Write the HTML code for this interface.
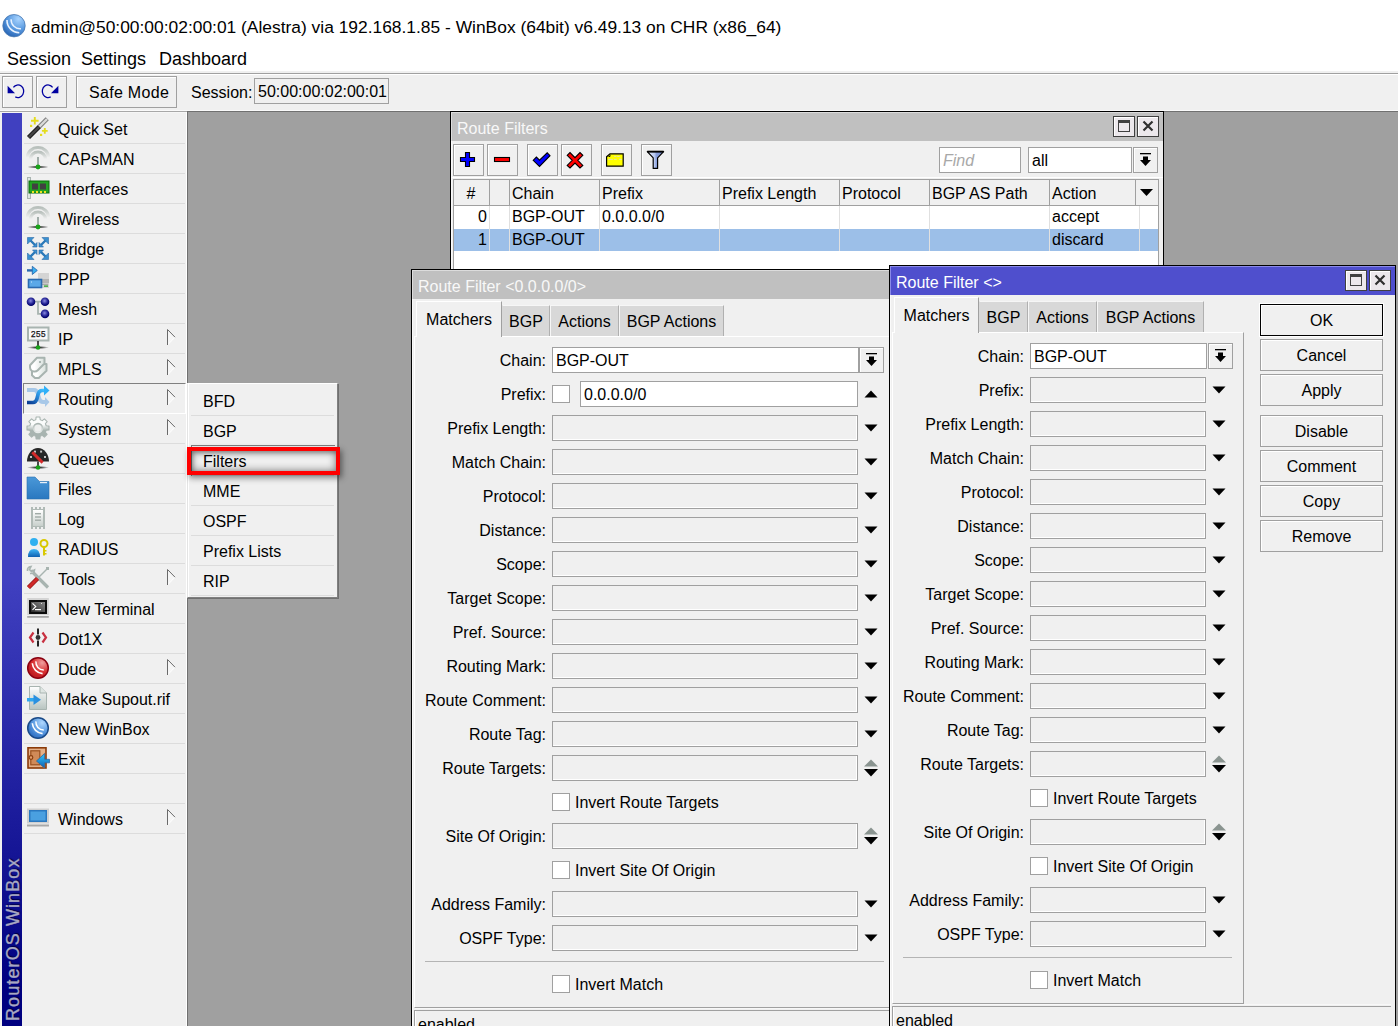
<!DOCTYPE html>
<html><head><meta charset="utf-8"><style>
html,body{margin:0;padding:0}
body{width:1398px;height:1026px;overflow:hidden;position:relative;background:#a0a0a0;font-family:"Liberation Sans", sans-serif;font-size:16px;color:#000}
div{position:absolute}
.t{white-space:nowrap}
svg{position:absolute;overflow:visible}
</style></head><body>
<div style="left:0px;top:0px;width:1398px;height:71px;background:#fff"></div>
<svg style="position:absolute;left:0px;top:12px" width="30" height="28" viewBox="0 0 30 28"><defs><radialGradient id="wg" cx="0.7" cy="0.2" r="0.95"><stop offset="0" stop-color="#a8d4ff"/><stop offset="0.5" stop-color="#5a9ae0"/><stop offset="1" stop-color="#1c58aa"/></radialGradient></defs><circle cx="14" cy="13.7" r="11.2" fill="url(#wg)" stroke="#4a78b0" stroke-width="0.8"/><path d="M7 7.9 A12.5 12.5 0 0 0 19.3 20.7" stroke="#e8f2ff" stroke-width="1.6" fill="none"/><path d="M11.1 7.3 A9 9 0 0 0 21 16.7" stroke="#e8f2ff" stroke-width="1.5" fill="none"/></svg>
<div class="t" style="left:31px;top:19px;font-size:17.4px;line-height:17.4px;color:#000;">admin@50:00:00:02:00:01 (Alestra) via 192.168.1.85 - WinBox (64bit) v6.49.13 on CHR (x86_64)</div>
<div class="t" style="left:7px;top:50px;font-size:18px;line-height:18px;color:#000;">Session</div>
<div class="t" style="left:81px;top:50px;font-size:18px;line-height:18px;color:#000;">Settings</div>
<div class="t" style="left:159px;top:50px;font-size:18px;line-height:18px;color:#000;">Dashboard</div>
<div style="left:0px;top:71px;width:1398px;height:2px;background:#f0f0f0"></div>
<div style="left:0px;top:73px;width:1398px;height:1px;background:#a0a0a0"></div>
<div style="left:0px;top:74px;width:1398px;height:1px;background:#fff"></div>
<div style="left:0px;top:75px;width:1398px;height:36px;background:#f0f0f0"></div>
<div style="left:0px;top:110px;width:1398px;height:1px;background:#fafafa"></div>
<div style="left:0px;top:111px;width:1398px;height:1px;background:#a8a8a8"></div>
<div style="left:0px;top:112px;width:1398px;height:1px;background:#f6f6f6"></div>
<div style="left:2px;top:76px;width:31px;height:32px;background:#f0f0f0;border:1px solid #a0a0a0;box-sizing:border-box;box-shadow:inset 1px 1px 0 #fff"></div>
<div style="left:36px;top:76px;width:31px;height:32px;background:#f0f0f0;border:1px solid #a0a0a0;box-sizing:border-box;box-shadow:inset 1px 1px 0 #fff"></div>
<svg style="position:absolute;left:2px;top:76px" width="31" height="32" viewBox="0 0 31 32"><path d="M5.6 9.8 L5.6 17.2 L13 17.2 Z" fill="#0000a0"/><path d="M11.4 11.3 A5.8 6.3 0 1 1 13.3 20.9" stroke="#0000a0" stroke-width="1.3" fill="none"/></svg>
<svg style="position:absolute;left:36px;top:76px" width="31" height="32" viewBox="0 0 31 32"><path d="M22.4 9.8 L22.4 17.2 L15 17.2 Z" fill="#0000a0"/><path d="M16.6 11.3 A5.8 6.3 0 1 0 14.7 20.9" stroke="#0000a0" stroke-width="1.3" fill="none"/></svg>
<div style="left:76px;top:76px;width:101px;height:32px;background:#f0f0f0;border:1px solid #a0a0a0;box-sizing:border-box;box-shadow:inset 1px 1px 0 #fff"></div>
<div class="t" style="left:89px;top:85px;font-size:16px;line-height:16px;color:#000;letter-spacing:0.3px">Safe Mode</div>
<div class="t" style="left:191px;top:85px;font-size:16px;line-height:16px;color:#000;">Session:</div>
<div style="left:254px;top:78px;width:135px;height:26px;background:#f0f0f0;border:1px solid #a0a0a0;box-sizing:border-box"></div>
<div class="t" style="left:258px;top:84px;font-size:16px;line-height:16px;color:#000;">50:00:00:02:00:01</div>
<div style="left:188px;top:112px;width:1210px;height:914px;background:#a0a0a0"></div>
<div style="left:187px;top:111px;width:1px;height:915px;background:#707070"></div>
<div style="left:187px;top:111px;width:1211px;height:1px;background:#707070"></div>
<div style="left:0px;top:112px;width:187px;height:914px;background:#f0f0f0"></div>
<div style="left:0px;top:112px;width:186px;height:1px;background:#f6f6f6"></div>
<div style="left:2px;top:113px;width:20px;height:913px;background:linear-gradient(#4040c0 51.2%,#000080 96%)"></div>
<div style="left:186px;top:112px;width:1px;height:914px;background:#fff"></div>
<div style="left:187px;top:111px;width:1px;height:915px;background:#707070"></div>
<div class="t" style="left:-72.24px;top:926.4px;width:170px;height:20px;font-size:18px;line-height:20px;letter-spacing:1.1px;color:#a8a8c4;-webkit-text-stroke:0.35px #a8a8c4;transform:rotate(-90deg);text-shadow:1px 1px 1px #000040;">RouterOS WinBox</div>
<div style="left:24px;top:143px;width:161px;height:1px;background:#dcdcdc"></div>
<div class="t" style="left:58px;top:122px;font-size:16px;line-height:16px;color:#000;">Quick Set</div>
<div style="left:24px;top:173px;width:161px;height:1px;background:#dcdcdc"></div>
<div class="t" style="left:58px;top:152px;font-size:16px;line-height:16px;color:#000;">CAPsMAN</div>
<div style="left:24px;top:203px;width:161px;height:1px;background:#dcdcdc"></div>
<div class="t" style="left:58px;top:182px;font-size:16px;line-height:16px;color:#000;">Interfaces</div>
<div style="left:24px;top:233px;width:161px;height:1px;background:#dcdcdc"></div>
<div class="t" style="left:58px;top:212px;font-size:16px;line-height:16px;color:#000;">Wireless</div>
<div style="left:24px;top:263px;width:161px;height:1px;background:#dcdcdc"></div>
<div class="t" style="left:58px;top:242px;font-size:16px;line-height:16px;color:#000;">Bridge</div>
<div style="left:24px;top:293px;width:161px;height:1px;background:#dcdcdc"></div>
<div class="t" style="left:58px;top:272px;font-size:16px;line-height:16px;color:#000;">PPP</div>
<div style="left:24px;top:323px;width:161px;height:1px;background:#dcdcdc"></div>
<div class="t" style="left:58px;top:302px;font-size:16px;line-height:16px;color:#000;">Mesh</div>
<div style="left:24px;top:353px;width:161px;height:1px;background:#dcdcdc"></div>
<div class="t" style="left:58px;top:332px;font-size:16px;line-height:16px;color:#000;">IP</div>
<svg style="position:absolute;left:166px;top:329px" width="10" height="18" viewBox="0 0 10 18"><path d="M1.5 0.5 L1.5 16 L9 8.2 Z" fill="#f6f6f6"/><path d="M9 8.2 L1.5 16" stroke="#fff" stroke-width="1"/><path d="M1.5 16 L1.5 0.5 L9 8.2" stroke="#6a6a6a" stroke-width="1" fill="none"/></svg>
<div style="left:24px;top:383px;width:161px;height:1px;background:#dcdcdc"></div>
<div class="t" style="left:58px;top:362px;font-size:16px;line-height:16px;color:#000;">MPLS</div>
<svg style="position:absolute;left:166px;top:359px" width="10" height="18" viewBox="0 0 10 18"><path d="M1.5 0.5 L1.5 16 L9 8.2 Z" fill="#f6f6f6"/><path d="M9 8.2 L1.5 16" stroke="#fff" stroke-width="1"/><path d="M1.5 16 L1.5 0.5 L9 8.2" stroke="#6a6a6a" stroke-width="1" fill="none"/></svg>
<div style="left:24px;top:413px;width:161px;height:1px;background:#dcdcdc"></div>
<div class="t" style="left:58px;top:392px;font-size:16px;line-height:16px;color:#000;">Routing</div>
<svg style="position:absolute;left:166px;top:389px" width="10" height="18" viewBox="0 0 10 18"><path d="M1.5 0.5 L1.5 16 L9 8.2 Z" fill="#f6f6f6"/><path d="M9 8.2 L1.5 16" stroke="#fff" stroke-width="1"/><path d="M1.5 16 L1.5 0.5 L9 8.2" stroke="#6a6a6a" stroke-width="1" fill="none"/></svg>
<div style="left:24px;top:443px;width:161px;height:1px;background:#dcdcdc"></div>
<div class="t" style="left:58px;top:422px;font-size:16px;line-height:16px;color:#000;">System</div>
<svg style="position:absolute;left:166px;top:419px" width="10" height="18" viewBox="0 0 10 18"><path d="M1.5 0.5 L1.5 16 L9 8.2 Z" fill="#f6f6f6"/><path d="M9 8.2 L1.5 16" stroke="#fff" stroke-width="1"/><path d="M1.5 16 L1.5 0.5 L9 8.2" stroke="#6a6a6a" stroke-width="1" fill="none"/></svg>
<div style="left:24px;top:473px;width:161px;height:1px;background:#dcdcdc"></div>
<div class="t" style="left:58px;top:452px;font-size:16px;line-height:16px;color:#000;">Queues</div>
<div style="left:24px;top:503px;width:161px;height:1px;background:#dcdcdc"></div>
<div class="t" style="left:58px;top:482px;font-size:16px;line-height:16px;color:#000;">Files</div>
<div style="left:24px;top:533px;width:161px;height:1px;background:#dcdcdc"></div>
<div class="t" style="left:58px;top:512px;font-size:16px;line-height:16px;color:#000;">Log</div>
<div style="left:24px;top:563px;width:161px;height:1px;background:#dcdcdc"></div>
<div class="t" style="left:58px;top:542px;font-size:16px;line-height:16px;color:#000;">RADIUS</div>
<div style="left:24px;top:593px;width:161px;height:1px;background:#dcdcdc"></div>
<div class="t" style="left:58px;top:572px;font-size:16px;line-height:16px;color:#000;">Tools</div>
<svg style="position:absolute;left:166px;top:569px" width="10" height="18" viewBox="0 0 10 18"><path d="M1.5 0.5 L1.5 16 L9 8.2 Z" fill="#f6f6f6"/><path d="M9 8.2 L1.5 16" stroke="#fff" stroke-width="1"/><path d="M1.5 16 L1.5 0.5 L9 8.2" stroke="#6a6a6a" stroke-width="1" fill="none"/></svg>
<div style="left:24px;top:623px;width:161px;height:1px;background:#dcdcdc"></div>
<div class="t" style="left:58px;top:602px;font-size:16px;line-height:16px;color:#000;">New Terminal</div>
<div style="left:24px;top:653px;width:161px;height:1px;background:#dcdcdc"></div>
<div class="t" style="left:58px;top:632px;font-size:16px;line-height:16px;color:#000;">Dot1X</div>
<div style="left:24px;top:683px;width:161px;height:1px;background:#dcdcdc"></div>
<div class="t" style="left:58px;top:662px;font-size:16px;line-height:16px;color:#000;">Dude</div>
<svg style="position:absolute;left:166px;top:659px" width="10" height="18" viewBox="0 0 10 18"><path d="M1.5 0.5 L1.5 16 L9 8.2 Z" fill="#f6f6f6"/><path d="M9 8.2 L1.5 16" stroke="#fff" stroke-width="1"/><path d="M1.5 16 L1.5 0.5 L9 8.2" stroke="#6a6a6a" stroke-width="1" fill="none"/></svg>
<div style="left:24px;top:713px;width:161px;height:1px;background:#dcdcdc"></div>
<div class="t" style="left:58px;top:692px;font-size:16px;line-height:16px;color:#000;">Make Supout.rif</div>
<div style="left:24px;top:743px;width:161px;height:1px;background:#dcdcdc"></div>
<div class="t" style="left:58px;top:722px;font-size:16px;line-height:16px;color:#000;">New WinBox</div>
<div style="left:24px;top:773px;width:161px;height:1px;background:#dcdcdc"></div>
<div class="t" style="left:58px;top:752px;font-size:16px;line-height:16px;color:#000;">Exit</div>
<div style="left:24px;top:803px;width:161px;height:1px;background:#dcdcdc"></div>
<div style="left:24px;top:833px;width:161px;height:1px;background:#dcdcdc"></div>
<div class="t" style="left:58px;top:812px;font-size:16px;line-height:16px;color:#000;">Windows</div>
<svg style="position:absolute;left:166px;top:809px" width="10" height="18" viewBox="0 0 10 18"><path d="M1.5 0.5 L1.5 16 L9 8.2 Z" fill="#f6f6f6"/><path d="M9 8.2 L1.5 16" stroke="#fff" stroke-width="1"/><path d="M1.5 16 L1.5 0.5 L9 8.2" stroke="#6a6a6a" stroke-width="1" fill="none"/></svg>
<div style="left:23px;top:383px;width:163px;height:31px;border-top:1px solid #808080;border-left:1px solid #808080;border-bottom:1px solid #fff;border-right:1px solid #fff;box-sizing:border-box"></div>
<svg style="position:absolute;left:24px;top:113px" width="30" height="30" viewBox="0 0 30 30"><path d="M4.5 24.5 L15.5 13.5" stroke="#1a1a1a" stroke-width="4.4"/><path d="M4.8 24.2 L15.5 13.5" stroke="#444" stroke-width="2.4"/><path d="M15.5 13.5 L23.2 5.8" stroke="#7a7a7a" stroke-width="4.4"/><path d="M15.5 13.5 L23 6" stroke="#dadada" stroke-width="2.4"/><path d="M10.8 4 V11.4 M7 7.7 H14.6" stroke="#e4dc1c" stroke-width="1.9"/><path d="M20.8 15 V20.8 M17.9 17.9 H23.7" stroke="#e4dc1c" stroke-width="1.9"/><rect x="6" y="11.8" width="2.2" height="2.2" fill="#e4dc1c"/><rect x="16" y="20.8" width="2.2" height="2.2" fill="#e4dc1c"/></svg>
<svg style="position:absolute;left:24px;top:143px" width="30" height="30" viewBox="0 0 30 30"><defs><linearGradient id="arcg" x1="0" y1="0" x2="0" y2="1"><stop offset="0" stop-color="#b8c0bc"/><stop offset="1" stop-color="#f0f0f0"/></linearGradient><radialGradient id="shd" cx="0.5" cy="0.5" r="0.5"><stop offset="0" stop-color="#000"/><stop offset="1" stop-color="#000" stop-opacity="0"/></radialGradient></defs><path d="M3.5 14.5 A10.5 10 0 0 1 24.5 14.5" stroke="url(#arcg)" stroke-width="3.2" fill="none"/><path d="M6.5 16 A7.5 7 0 0 1 21.5 16" stroke="url(#arcg)" stroke-width="3.2" fill="none"/><rect x="13" y="14" width="2" height="10" fill="#a0aca8"/><ellipse cx="14" cy="24" rx="11" ry="1.6" fill="url(#shd)"/><circle cx="14" cy="24" r="2.4" fill="#19a319"/></svg>
<svg style="position:absolute;left:24px;top:173px" width="30" height="30" viewBox="0 0 30 30"><rect x="3.5" y="4.5" width="3" height="21" fill="#dde4e0" stroke="#a8b4b0" stroke-width="1"/><rect x="5" y="8" width="20" height="12" fill="#22a322" stroke="#0b6a0b" stroke-width="1"/><rect x="8" y="10.5" width="6" height="6" fill="#404040"/><rect x="16" y="10.5" width="6" height="6" fill="#404040"/><rect x="8" y="18" width="2" height="2" fill="#f0e020"/><rect x="12" y="18" width="2" height="2" fill="#f0e020"/><rect x="16" y="18" width="2" height="2" fill="#f0e020"/><rect x="20" y="18" width="2" height="2" fill="#f0e020"/></svg>
<svg style="position:absolute;left:24px;top:203px" width="30" height="30" viewBox="0 0 30 30"><defs><linearGradient id="arcg" x1="0" y1="0" x2="0" y2="1"><stop offset="0" stop-color="#b8c0bc"/><stop offset="1" stop-color="#f0f0f0"/></linearGradient><radialGradient id="shd" cx="0.5" cy="0.5" r="0.5"><stop offset="0" stop-color="#000"/><stop offset="1" stop-color="#000" stop-opacity="0"/></radialGradient></defs><path d="M3.5 14.5 A10.5 10 0 0 1 24.5 14.5" stroke="url(#arcg)" stroke-width="3.2" fill="none"/><path d="M6.5 16 A7.5 7 0 0 1 21.5 16" stroke="url(#arcg)" stroke-width="3.2" fill="none"/><rect x="13" y="14" width="2" height="10" fill="#a0aca8"/><ellipse cx="14" cy="24" rx="11" ry="1.6" fill="url(#shd)"/><circle cx="14" cy="24" r="2.4" fill="#19a319"/></svg>
<svg style="position:absolute;left:24px;top:233px" width="30" height="30" viewBox="0 0 30 30"><g stroke="#2a78b8" stroke-width="2.4" fill="#3a90d0"><path d="M5.5 6.5 L11.5 12.5 M22.5 6.5 L16.5 12.5 M5.5 24.5 L11.5 18.5 M22.5 24.5 L16.5 18.5"/></g><g fill="#3a90d0" stroke="#2a6aa8" stroke-width="0.6"><path d="M3.5 4.5 L10 4.5 L3.5 11 Z"/><path d="M24.5 4.5 L18 4.5 L24.5 11 Z"/><path d="M3.5 26.5 L10 26.5 L3.5 20 Z"/><path d="M24.5 26.5 L18 26.5 L24.5 20 Z"/><path d="M13 14 L8.5 14 L13 9.5 Z"/><path d="M15 14 L19.5 14 L15 9.5 Z"/><path d="M13 17 L8.5 17 L13 21.5 Z"/><path d="M15 17 L19.5 17 L15 21.5 Z"/></g></svg>
<svg style="position:absolute;left:24px;top:263px" width="30" height="30" viewBox="0 0 30 30"><rect x="14" y="10" width="11" height="15" fill="#d4d4d4"/><rect x="17" y="16" width="8" height="4" fill="#b4b4b4"/><rect x="20" y="22.5" width="4" height="1.2" fill="#1aa01a"/><rect x="18" y="20.8" width="6" height="1" fill="#a0a0a0"/><rect x="4.5" y="16.5" width="13" height="8" fill="#5aa8e8" stroke="#2a6ab0" stroke-width="1.6"/><rect x="7" y="18.5" width="1" height="1" fill="#d0e8ff"/><rect x="3" y="6.2" width="6" height="2.4" fill="#2a6ab0"/><path d="M8.3 3.3 L13.3 7.4 L8.3 11.5 Z" fill="#38b0f0" stroke="#2a6ab0" stroke-width="0.9"/></svg>
<svg style="position:absolute;left:24px;top:293px" width="30" height="30" viewBox="0 0 30 30"><path d="M10 8.7 H14 V20.9 H18 M14 8.7 H18" stroke="#a8b4b0" stroke-width="1.8" fill="none"/><defs><radialGradient id="mg" cx="0.45" cy="0.4" r="0.55"><stop offset="0" stop-color="#8a8ae0"/><stop offset="0.6" stop-color="#2a2a9a"/><stop offset="1" stop-color="#00006a"/></radialGradient></defs><circle cx="7" cy="8.7" r="4.3" fill="url(#mg)"/><circle cx="21" cy="8.7" r="4.3" fill="url(#mg)"/><circle cx="21" cy="20.9" r="4.3" fill="url(#mg)"/></svg>
<svg style="position:absolute;left:24px;top:323px" width="30" height="30" viewBox="0 0 30 30"><rect x="4" y="4.5" width="20.5" height="13" fill="#f8f8f8" stroke="#a8b4b0" stroke-width="2"/><text x="14.2" y="13.6" font-family="Liberation Mono" font-size="9.6" text-anchor="middle" fill="#111" stroke="#111" stroke-width="0.25" textLength="15" lengthAdjust="spacingAndGlyphs">255</text><rect x="13.2" y="18" width="1.6" height="6" fill="#222"/><defs><radialGradient id="shd2" cx="0.5" cy="0.5" r="0.5"><stop offset="0" stop-color="#000"/><stop offset="1" stop-color="#000" stop-opacity="0"/></radialGradient></defs><ellipse cx="14" cy="24.5" rx="11" ry="1.6" fill="url(#shd2)"/><circle cx="14" cy="24.5" r="2.3" fill="#19a319"/></svg>
<svg style="position:absolute;left:24px;top:353px" width="30" height="30" viewBox="0 0 30 30"><defs><linearGradient id="tgg" x1="0" y1="0" x2="1" y2="0"><stop offset="0.3" stop-color="#ffffff"/><stop offset="1" stop-color="#d8e0dc"/></linearGradient></defs><path d="M22.5 11 V17.8 L14.8 25 H11 L8 22.2 V17 L15 11 Z" fill="url(#tgg)" stroke="#a8b4b0" stroke-width="2" stroke-linejoin="round"/><path d="M13 4.8 H20.5 V10.5 L13.8 17.3 Q12.3 18.8 10.3 18.6 L8 18 Q6 16.8 6 14.6 V12.2 Z" fill="url(#tgg)" stroke="#a8b4b0" stroke-width="2" stroke-linejoin="round"/><rect x="15" y="8" width="2" height="2" fill="#a8b4b0"/></svg>
<svg style="position:absolute;left:24px;top:383px" width="30" height="30" viewBox="0 0 30 30"><path d="M3 7 H10 Q13 7 14 11 L15 15 Q16 19 19 19 H22" stroke="#a8c8e8" stroke-width="4" fill="none"/><path d="M21 14 L25.5 19 L21 24 Z" fill="#a8c8e8"/><defs><linearGradient id="rg" x1="0" y1="1" x2="1" y2="0"><stop offset="0" stop-color="#0a3a90"/><stop offset="0.6" stop-color="#2a90e0"/><stop offset="1" stop-color="#40c0ff"/></linearGradient></defs><path d="M3 19.5 H9 Q12 19.5 13 15.5 L14 11.5 Q15 7.5 18 7.5 H21" stroke="url(#rg)" stroke-width="3.6" fill="none"/><path d="M20 2.5 L25.5 7.5 L20 12.5 Z" fill="#30b0f8"/></svg>
<svg style="position:absolute;left:24px;top:413px" width="30" height="30" viewBox="0 0 30 30"><defs><linearGradient id="gg" x1="0" y1="0" x2="0" y2="1"><stop offset="0.35" stop-color="#fafcfb"/><stop offset="0.62" stop-color="#a8b4b0"/></linearGradient><linearGradient id="gh" x1="0" y1="0" x2="0" y2="1"><stop offset="0" stop-color="#a8b4b0"/><stop offset="1" stop-color="#e8ecea"/></linearGradient></defs><path d="M11.80 6.80 L12.10 4.00 L15.90 4.00 L16.20 6.80 A8.2 8.2 0 0 1 18.24 7.65 L18.24 7.65 L20.43 5.88 L23.12 8.57 L21.35 10.76 A8.2 8.2 0 0 1 22.20 12.80 L22.20 12.80 L25.00 13.10 L25.00 16.90 L22.20 17.20 A8.2 8.2 0 0 1 21.35 19.24 L21.35 19.24 L23.12 21.43 L20.43 24.12 L18.24 22.35 A8.2 8.2 0 0 1 16.20 23.20 L16.20 23.20 L15.90 26.00 L12.10 26.00 L11.80 23.20 A8.2 8.2 0 0 1 9.76 22.35 L9.76 22.35 L7.57 24.12 L4.88 21.43 L6.65 19.24 A8.2 8.2 0 0 1 5.80 17.20 L5.80 17.20 L3.00 16.90 L3.00 13.10 L5.80 12.80 A8.2 8.2 0 0 1 6.65 10.76 L6.65 10.76 L4.88 8.57 L7.57 5.88 L9.76 7.65 A8.2 8.2 0 0 1 11.80 6.80 Z" fill="url(#gg)" stroke="#a8b4b0" stroke-width="1.1" stroke-linejoin="round"/><circle cx="14" cy="15" r="4.4" fill="#eef0ef" stroke="url(#gh)" stroke-width="1.6"/></svg>
<svg style="position:absolute;left:24px;top:443px" width="30" height="30" viewBox="0 0 30 30"><path d="M3 18.5 A11 13.5 0 0 1 25 18.5 Z" fill="#262626"/><rect x="6" y="13" width="2" height="2" fill="#c4c4c4"/><rect x="10" y="7.6" width="2" height="2" fill="#c4c4c4"/><rect x="16.1" y="7.6" width="2" height="2" fill="#c4c4c4"/><rect x="20" y="13" width="2" height="2" fill="#c4c4c4"/><path d="M8.3 9.3 L18.6 19.6" stroke="#d42a2a" stroke-width="3"/><rect x="13.2" y="18.5" width="1.6" height="5" fill="#222"/><defs><radialGradient id="shd2" cx="0.5" cy="0.5" r="0.5"><stop offset="0" stop-color="#000"/><stop offset="1" stop-color="#000" stop-opacity="0"/></radialGradient></defs><ellipse cx="14" cy="24.5" rx="11" ry="1.6" fill="url(#shd2)"/><circle cx="14" cy="24.5" r="2.3" fill="#19a319"/></svg>
<svg style="position:absolute;left:24px;top:473px" width="30" height="30" viewBox="0 0 30 30"><defs><linearGradient id="fdg" x1="0" y1="0" x2="0" y2="1"><stop offset="0" stop-color="#4a98d8"/><stop offset="1" stop-color="#2a78c0"/></linearGradient></defs><path d="M3 4 H11 L15.5 8.5 H25 V26 H3 Z" fill="url(#fdg)" stroke="#2a70b0" stroke-width="0.6"/><rect x="16" y="9" width="7" height="1.2" fill="#e8f0f8"/></svg>
<svg style="position:absolute;left:24px;top:503px" width="30" height="30" viewBox="0 0 30 30"><path d="M7 4 H9 V6 H11 V4 H13 V6 H15 V4 H17 V6 H19 V4 H21 V26 H19 V24 H17 V26 H15 V24 H13 V26 H11 V24 H9 V26 H7 Z" fill="#b0bab6"/><defs><linearGradient id="lgg" x1="0" y1="0" x2="0" y2="1"><stop offset="0" stop-color="#fff"/><stop offset="1" stop-color="#c8d0cc"/></linearGradient></defs><rect x="9" y="7" width="10" height="16" fill="url(#lgg)"/><rect x="11" y="10" width="6" height="1.4" fill="#a0aaa6"/><rect x="11" y="13.3" width="6" height="1.4" fill="#a0aaa6"/><rect x="11" y="16.5" width="6" height="1.4" fill="#a0aaa6"/></svg>
<svg style="position:absolute;left:24px;top:533px" width="30" height="30" viewBox="0 0 30 30"><defs><linearGradient id="ug" x1="0" y1="0" x2="0" y2="1"><stop offset="0" stop-color="#40b8f8"/><stop offset="1" stop-color="#1060b0"/></linearGradient></defs><circle cx="10" cy="9" r="4" fill="#30b0f0"/><path d="M4 24 Q4 16 10 16 Q16 16 16 24 Z" fill="url(#ug)"/><circle cx="20" cy="10.5" r="3.5" fill="none" stroke="#d8c800" stroke-width="2"/><rect x="19" y="13.5" width="2" height="9" fill="#d8c800"/><rect x="20.5" y="17" width="2" height="1.5" fill="#d8c800"/><rect x="20.5" y="20" width="2" height="1.5" fill="#d8c800"/></svg>
<svg style="position:absolute;left:24px;top:563px" width="30" height="30" viewBox="0 0 30 30"><path d="M7 7.5 L24 24.5" stroke="#a8b4b0" stroke-width="3.2"/><path d="M3.5 8 Q3 4 7 3.5 L5.5 6.5 L7.5 8.5 L10.5 7 Q10 11 6 10.5" fill="#e8ecea" stroke="#a8b4b0" stroke-width="1.6"/><path d="M14 15 L23.5 5.5" stroke="#a8b4b0" stroke-width="1.5"/><rect x="22" y="4" width="3" height="3" fill="#a8b4b0"/><path d="M4.5 24.5 L13.5 15.5" stroke="#901818" stroke-width="4.5"/><path d="M4.5 24.5 L13.5 15.5" stroke="#d02828" stroke-width="3"/></svg>
<svg style="position:absolute;left:24px;top:593px" width="30" height="30" viewBox="0 0 30 30"><rect x="3.2" y="5" width="21.6" height="17" fill="#d4d4d4"/><rect x="5" y="7" width="18" height="14" fill="#0c0c0c"/><defs><linearGradient id="tg" x1="0" y1="1" x2="1" y2="0"><stop offset="0" stop-color="#2a2a2a"/><stop offset="1" stop-color="#8a8a8a"/></linearGradient></defs><rect x="7" y="9" width="14" height="10" fill="url(#tg)"/><path d="M8.5 10.3 L11.8 13.5 L8.5 16.8" stroke="#fff" stroke-width="1.1" fill="none"/><rect x="11" y="16" width="6" height="1.2" fill="#fff"/><rect x="17" y="10" width="1" height="1" fill="#ddd"/><rect x="3.2" y="23" width="21.6" height="1.8" fill="#a8a8a8"/></svg>
<svg style="position:absolute;left:24px;top:623px" width="30" height="30" viewBox="0 0 30 30"><path d="M9.5 9.5 L6 14.5 L9.5 19.5" stroke="#c83040" stroke-width="2.2" fill="none"/><path d="M18.5 9.5 L22 14.5 L18.5 19.5" stroke="#c83040" stroke-width="2.2" fill="none"/><rect x="13" y="5.5" width="2" height="6" fill="#222"/><rect x="13" y="17.5" width="2" height="6" fill="#222"/><circle cx="14" cy="14.5" r="2.4" fill="#333"/></svg>
<svg style="position:absolute;left:24px;top:653px" width="30" height="30" viewBox="0 0 30 30"><defs><radialGradient id="dg" cx="0.7" cy="0.25" r="0.9"><stop offset="0" stop-color="#f0a0a0"/><stop offset="0.5" stop-color="#d83030"/><stop offset="1" stop-color="#b01018"/></radialGradient></defs><circle cx="14" cy="15" r="10.3" fill="url(#dg)" stroke="#8a0010" stroke-width="1.5"/><path d="M8.3 10.3 A11.2 11.2 0 0 0 18.6 20.6" stroke="#fff" stroke-width="1.6" fill="none"/><path d="M11.9 8.4 A7.8 7.8 0 0 0 19.8 16.9" stroke="#fff" stroke-width="1.5" fill="none"/></svg>
<svg style="position:absolute;left:24px;top:683px" width="30" height="30" viewBox="0 0 30 30"><defs><linearGradient id="dcg" x1="0" y1="0" x2="0" y2="1"><stop offset="0" stop-color="#ffffff"/><stop offset="1" stop-color="#b8c4c0"/></linearGradient></defs><path d="M5.5 3.5 H16 L22.5 10 V26.5 H5.5 Z" fill="url(#dcg)" stroke="#a8b4b0" stroke-width="1"/><path d="M16 3.5 V10 H22.5" fill="#dfe6e3" stroke="#a8b4b0" stroke-width="1"/><rect x="3" y="15" width="7" height="3.5" fill="#30a8f0"/><path d="M9.5 11.5 L17 16.7 L9.5 22 Z" fill="#2a90e0"/></svg>
<svg style="position:absolute;left:24px;top:713px" width="30" height="30" viewBox="0 0 30 30"><defs><radialGradient id="nwg" cx="0.7" cy="0.25" r="0.9"><stop offset="0" stop-color="#b0d8ff"/><stop offset="0.5" stop-color="#5a9ae0"/><stop offset="1" stop-color="#2060b8"/></radialGradient></defs><circle cx="14" cy="15" r="10.3" fill="url(#nwg)" stroke="#1a4a88" stroke-width="1.5"/><path d="M8.3 10.3 A11.2 11.2 0 0 0 18.6 20.6" stroke="#fff" stroke-width="1.6" fill="none"/><path d="M11.9 8.4 A7.8 7.8 0 0 0 19.8 16.9" stroke="#fff" stroke-width="1.5" fill="none"/></svg>
<svg style="position:absolute;left:24px;top:743px" width="30" height="30" viewBox="0 0 30 30"><rect x="4" y="4.8" width="18" height="20.2" fill="#e4b088" stroke="#8a3a08" stroke-width="1.6"/><rect x="6.8" y="7.8" width="9" height="14" fill="#d08a58" stroke="#9a5020" stroke-width="1.2"/><circle cx="7" cy="14.5" r="1.8" fill="#e4a070" stroke="#8a4010" stroke-width="1.2"/><path d="M12 18 L21 9.6 L21 25.7 Z" fill="#c08050"/><defs><linearGradient id="eg" x1="0" y1="0" x2="0" y2="1"><stop offset="0" stop-color="#30c8ff"/><stop offset="1" stop-color="#1060b0"/></linearGradient></defs><path d="M12.5 18 L20.6 10.6 L20.6 16.3 L25.5 16.3 L25.5 19.8 L20.6 19.8 L20.6 25 Z" fill="url(#eg)" stroke="#2a6aa8" stroke-width="0.8"/></svg>
<svg style="position:absolute;left:24px;top:803px" width="30" height="30" viewBox="0 0 30 30"><rect x="3" y="5.5" width="22" height="15" fill="#d0d0d0"/><rect x="5" y="7" width="18" height="12" fill="#2a78c0"/><rect x="6.5" y="8.5" width="15" height="9" fill="#4aa0e0"/><rect x="3" y="21.5" width="22" height="2" fill="#a8a8a8"/></svg>
<div style="left:187px;top:383px;width:151px;height:215px;background:#f0f0f0;border-top:1px solid #fff;border-left:1px solid #e4e4e4;border-right:1px solid #808080;border-bottom:1px solid #808080;box-sizing:border-box;box-shadow:1px 1px 0 #707070,inset 1px 0 0 #fff"></div>
<div style="left:191px;top:415px;width:143px;height:1px;background:#dcdcdc"></div>
<div class="t" style="left:203px;top:394px;font-size:16px;line-height:16px;color:#000;">BFD</div>
<div style="left:191px;top:445px;width:143px;height:1px;background:#dcdcdc"></div>
<div class="t" style="left:203px;top:424px;font-size:16px;line-height:16px;color:#000;">BGP</div>
<div style="left:191px;top:475px;width:143px;height:1px;background:#dcdcdc"></div>
<div class="t" style="left:203px;top:454px;font-size:16px;line-height:16px;color:#000;">Filters</div>
<div style="left:191px;top:505px;width:143px;height:1px;background:#dcdcdc"></div>
<div class="t" style="left:203px;top:484px;font-size:16px;line-height:16px;color:#000;">MME</div>
<div style="left:191px;top:535px;width:143px;height:1px;background:#dcdcdc"></div>
<div class="t" style="left:203px;top:514px;font-size:16px;line-height:16px;color:#000;">OSPF</div>
<div style="left:191px;top:565px;width:143px;height:1px;background:#dcdcdc"></div>
<div class="t" style="left:203px;top:544px;font-size:16px;line-height:16px;color:#000;">Prefix Lists</div>
<div style="left:191px;top:595px;width:143px;height:1px;background:#dcdcdc"></div>
<div class="t" style="left:203px;top:574px;font-size:16px;line-height:16px;color:#000;">RIP</div>
<div style="left:191px;top:445px;width:144px;height:31px;border-top:1px solid #808080;border-left:1px solid #808080;box-sizing:border-box"></div>
<div style="left:187px;top:447px;width:153px;height:28px;border:4px solid #ff0000;box-sizing:border-box;box-shadow:2px 3px 6px rgba(0,0,0,0.45),inset 0 0 8px rgba(0,0,0,0.5),inset 2px 2px 4px rgba(0,0,0,0.25)"></div>
<div style="left:450px;top:111px;width:714px;height:915px;background:#000"></div>
<div style="left:451px;top:112px;width:712px;height:913px;background:#f0f0f0"></div>
<div style="left:451px;top:112px;width:712px;height:29px;background:#c0c0c0"></div>
<div style="left:451px;top:112px;width:712px;height:1px;background:#dcdcdc"></div>
<div style="left:451px;top:112px;width:1px;height:913px;background:#fafafa"></div>
<div style="left:451px;top:112px;width:1px;height:29px;background:#dcdcdc"></div>
<div class="t" style="left:457px;top:121px;font-size:16px;line-height:16px;color:#f8f8f8;">Route Filters</div>
<div style="left:1113px;top:116px;width:22px;height:21px;background:#ece8ec;border:1px solid #404040;box-sizing:border-box;box-shadow:inset 1px 1px 0 #fff"></div>
<div style="left:1118px;top:120px;width:12px;height:12px;border:1px solid #404040;border-top:3px solid #404040;box-sizing:border-box"></div>
<div style="left:1137px;top:116px;width:22px;height:21px;background:#ece8ec;border:1px solid #404040;box-sizing:border-box;box-shadow:inset 1px 1px 0 #fff"></div>
<svg style="position:absolute;left:1137px;top:116px" width="22" height="21" viewBox="0 0 22 21"><path d="M6.5 5.5 L15.5 14.5 M15.5 5.5 L6.5 14.5" stroke="#303030" stroke-width="2.2"/></svg>
<div style="left:453px;top:144px;width:31px;height:32px;background:#f0f0f0;border:1px solid #a0a0a0;box-sizing:border-box;box-shadow:inset 1px 1px 0 #fff"></div>
<div style="left:487px;top:144px;width:31px;height:32px;background:#f0f0f0;border:1px solid #a0a0a0;box-sizing:border-box;box-shadow:inset 1px 1px 0 #fff"></div>
<div style="left:527px;top:144px;width:31px;height:32px;background:#f0f0f0;border:1px solid #a0a0a0;box-sizing:border-box;box-shadow:inset 1px 1px 0 #fff"></div>
<div style="left:561px;top:144px;width:31px;height:32px;background:#f0f0f0;border:1px solid #a0a0a0;box-sizing:border-box;box-shadow:inset 1px 1px 0 #fff"></div>
<div style="left:601px;top:144px;width:31px;height:32px;background:#f0f0f0;border:1px solid #a0a0a0;box-sizing:border-box;box-shadow:inset 1px 1px 0 #fff"></div>
<div style="left:641px;top:144px;width:31px;height:32px;background:#f0f0f0;border:1px solid #a0a0a0;box-sizing:border-box;box-shadow:inset 1px 1px 0 #fff"></div>
<svg style="position:absolute;left:453px;top:144px" width="31" height="32" viewBox="0 0 31 32"><path d="M12.5 8.5 H16.5 V13.5 H21.5 V17.5 H16.5 V22.5 H12.5 V17.5 H7.5 V13.5 H12.5 Z" fill="#0000ff" stroke="#000" stroke-width="1.1"/></svg>
<svg style="position:absolute;left:487px;top:144px" width="31" height="32" viewBox="0 0 31 32"><rect x="7.5" y="13.5" width="15" height="4" fill="#ff0000" stroke="#000" stroke-width="1.1"/></svg>
<svg style="position:absolute;left:527px;top:144px" width="31" height="32" viewBox="0 0 31 32"><path d="M6.2 16.3 L9.4 13.1 L12.5 16.2 L20.2 8.8 L23 11.7 L12.5 22.4 Z" fill="#0000ff" stroke="#000" stroke-width="1.1" stroke-linejoin="miter"/></svg>
<svg style="position:absolute;left:561px;top:144px" width="31" height="32" viewBox="0 0 31 32"><path d="M6.2 11.3 L9 8.6 L14 13.6 L19 8.6 L21.8 11.3 L16.8 16.3 L21.8 21.4 L19 24 L14 19 L9 24 L6.2 21.4 L11.2 16.3 Z" fill="#ff0000" stroke="#000" stroke-width="1.1"/></svg>
<svg style="position:absolute;left:601px;top:144px" width="31" height="32" viewBox="0 0 31 32"><path d="M5.6 12.8 L9 9.8 L22.2 9.8 L22.2 22.2 L5.6 22.2 Z" fill="#ffff00" stroke="#000" stroke-width="1.2"/><path d="M7.5 12.5 L9 12.5 L9 10.5" fill="none" stroke="#000" stroke-width="0.9"/><path d="M13.1 12.4 h2.3 M16.2 12.4 h2.6 M7.2 15.4 h4.6 M13.1 15.4 h2.6 M18 15.4 h2.9" stroke="#e4e4b0" stroke-width="1"/></svg>
<svg style="position:absolute;left:641px;top:144px" width="31" height="32" viewBox="0 0 31 32"><defs><linearGradient id="fg" x1="0" x2="1"><stop offset="0" stop-color="#e8f0ff"/><stop offset="0.45" stop-color="#b8c8f0"/><stop offset="0.55" stop-color="#8aa0dc"/><stop offset="1" stop-color="#7088d0"/></linearGradient></defs><path d="M6.3 7.6 L22.6 7.6 L16.6 13.9 L16.6 24.4 L12.2 24.4 L12.2 13.9 Z" fill="url(#fg)" stroke="#000" stroke-width="1.2" stroke-linejoin="round"/><path d="M6.3 7.6 L22.6 7.6" stroke="#000" stroke-width="1.8"/></svg>
<div style="left:939px;top:147px;width:82px;height:26px;background:#fff;border:1px solid #a0a0a0;box-sizing:border-box"></div>
<div class="t" style="left:943px;top:153px;font-size:16px;line-height:16px;color:#a8a8a8;font-style:italic">Find</div>
<div style="left:1028px;top:147px;width:104px;height:26px;background:#fff;border:1px solid #a0a0a0;box-sizing:border-box"></div>
<div class="t" style="left:1032px;top:153px;font-size:16px;line-height:16px;color:#000;">all</div>
<div style="left:1133px;top:147px;width:25px;height:26px;background:#f0f0f0;border:1px solid #a0a0a0;box-sizing:border-box;box-shadow:inset 1px 1px 0 #fff"></div>
<svg style="position:absolute;left:1133px;top:147px" width="25" height="26" viewBox="0 0 25 26"><rect x="7.0" y="6" width="11" height="1.3" fill="#000"/><rect x="10.0" y="9.5" width="5" height="4" fill="#000"/><path d="M7.0 13 L18.0 13 L12.5 19 Z" fill="#000"/></svg>
<div style="left:451px;top:177px;width:712px;height:1px;background:#fff"></div>
<div style="left:453px;top:179px;width:706px;height:121px;background:#fff;border:1px solid #a0a0a0;border-bottom:none;box-sizing:border-box"></div>
<div style="left:454px;top:180px;width:704px;height:25px;background:#f0f0f0"></div>
<div style="left:453px;top:205px;width:706px;height:1px;background:#a0a0a0"></div>
<div style="left:489px;top:180px;width:1px;height:25px;background:#a0a0a0"></div>
<div style="left:509px;top:180px;width:1px;height:25px;background:#a0a0a0"></div>
<div style="left:599px;top:180px;width:1px;height:25px;background:#a0a0a0"></div>
<div style="left:719px;top:180px;width:1px;height:25px;background:#a0a0a0"></div>
<div style="left:839px;top:180px;width:1px;height:25px;background:#a0a0a0"></div>
<div style="left:929px;top:180px;width:1px;height:25px;background:#a0a0a0"></div>
<div style="left:1049px;top:180px;width:1px;height:25px;background:#a0a0a0"></div>
<div style="left:1135px;top:180px;width:1px;height:25px;background:#a0a0a0"></div>
<div style="left:454px;top:229px;width:704px;height:22px;background:#9cbfe8"></div>
<div style="left:489px;top:206px;width:1px;height:45px;background:#e0e0e0"></div>
<div style="left:509px;top:206px;width:1px;height:45px;background:#e0e0e0"></div>
<div style="left:599px;top:206px;width:1px;height:45px;background:#e0e0e0"></div>
<div style="left:719px;top:206px;width:1px;height:45px;background:#e0e0e0"></div>
<div style="left:839px;top:206px;width:1px;height:45px;background:#e0e0e0"></div>
<div style="left:929px;top:206px;width:1px;height:45px;background:#e0e0e0"></div>
<div style="left:1049px;top:206px;width:1px;height:45px;background:#e0e0e0"></div>
<div style="left:1139px;top:206px;width:1px;height:45px;background:#e0e0e0"></div>
<div class="t" style="left:453px;width:36px;text-align:center;top:186px;font-size:16px;line-height:16px;color:#000;">#</div>
<div class="t" style="left:512px;top:186px;font-size:16px;line-height:16px;color:#000;">Chain</div>
<div class="t" style="left:602px;top:186px;font-size:16px;line-height:16px;color:#000;">Prefix</div>
<div class="t" style="left:722px;top:186px;font-size:16px;line-height:16px;color:#000;">Prefix Length</div>
<div class="t" style="left:842px;top:186px;font-size:16px;line-height:16px;color:#000;">Protocol</div>
<div class="t" style="left:932px;top:186px;font-size:16px;line-height:16px;color:#000;">BGP AS Path</div>
<div class="t" style="left:1052px;top:186px;font-size:16px;line-height:16px;color:#000;">Action</div>
<svg style="position:absolute;left:1139px;top:188px" width="16" height="9" viewBox="0 0 16 9"><path d="M1 1 L14 1 L7.5 8 Z" fill="#000"/></svg>
<div class="t" style="right:911px;top:209px;font-size:16px;line-height:16px;color:#000;">0</div>
<div class="t" style="left:512px;top:209px;font-size:16px;line-height:16px;color:#000;">BGP-OUT</div>
<div class="t" style="left:602px;top:209px;font-size:16px;line-height:16px;color:#000;">0.0.0.0/0</div>
<div class="t" style="left:1052px;top:209px;font-size:16px;line-height:16px;color:#000;">accept</div>
<div class="t" style="right:911px;top:232px;font-size:16px;line-height:16px;color:#000;">1</div>
<div class="t" style="left:512px;top:232px;font-size:16px;line-height:16px;color:#000;">BGP-OUT</div>
<div class="t" style="left:1052px;top:232px;font-size:16px;line-height:16px;color:#000;">discard</div>
<div style="left:411px;top:269px;width:590px;height:762px;background:#000"></div>
<div style="left:412px;top:270px;width:588px;height:760px;background:#f0f0f0"></div>
<div style="left:412px;top:270px;width:588px;height:29px;background:#c0c0c0"></div>
<div style="left:412px;top:270px;width:588px;height:1px;background:#dcdcdc"></div>
<div style="left:412px;top:270px;width:1px;height:760px;background:#fafafa"></div>
<div style="left:412px;top:270px;width:1px;height:29px;background:#dcdcdc"></div>
<div class="t" style="left:418px;top:279px;font-size:16px;line-height:16px;color:#f8f8f8;">Route Filter &lt;0.0.0.0/0&gt;</div>
<div style="left:502px;top:305px;width:48px;height:31px;background:#d8d8d8;border-left:1px solid #d8d8d8;border-top:1px solid #f6f6f6;border-right:1px solid #b0b0b0;box-sizing:border-box"></div>
<div style="left:550px;top:305px;width:69px;height:31px;background:#d8d8d8;border-left:1px solid #f6f6f6;border-top:1px solid #f6f6f6;border-right:1px solid #b0b0b0;box-sizing:border-box"></div>
<div style="left:619px;top:305px;width:105px;height:31px;background:#d8d8d8;border-left:1px solid #f6f6f6;border-top:1px solid #f6f6f6;border-right:1px solid #b0b0b0;box-sizing:border-box"></div>
<div style="left:414px;top:336px;width:507px;height:672px;background:#f0f0f0;border-left:1px solid #fff;border-top:1px solid #fff;border-right:1px solid #a0a0a0;border-bottom:1px solid #a0a0a0;box-sizing:border-box"></div>
<div style="left:416px;top:301px;width:86px;height:36px;background:#f0f0f0;border-left:1px solid #fff;border-top:1px solid #fff;border-right:1px solid #a0a0a0;border-bottom:none;box-sizing:border-box"></div>
<div class="t" style="left:416px;width:86px;text-align:center;top:312px;font-size:16px;line-height:16px;color:#000;">Matchers</div>
<div class="t" style="left:502px;width:48px;text-align:center;top:314px;font-size:16px;line-height:16px;color:#000;">BGP</div>
<div class="t" style="left:550px;width:69px;text-align:center;top:314px;font-size:16px;line-height:16px;color:#000;">Actions</div>
<div class="t" style="left:619px;width:105px;text-align:center;top:314px;font-size:16px;line-height:16px;color:#000;">BGP Actions</div>
<div class="t" style="right:852px;top:353px;font-size:16px;line-height:16px;color:#000;">Chain:</div>
<div style="left:552px;top:347px;width:307px;height:26px;background:#fff;border:1px solid #a0a0a0;box-sizing:border-box"></div>
<div class="t" style="left:556px;top:353px;font-size:16px;line-height:16px;color:#000;">BGP-OUT</div>
<div style="left:859px;top:347px;width:25px;height:26px;background:#f0f0f0;border:1px solid #a0a0a0;box-sizing:border-box;box-shadow:inset 1px 1px 0 #fff"></div>
<svg style="position:absolute;left:859px;top:347px" width="25" height="26" viewBox="0 0 25 26"><rect x="7.0" y="6" width="11" height="1.3" fill="#000"/><rect x="10.0" y="9.5" width="5" height="4" fill="#000"/><path d="M7.0 13 L18.0 13 L12.5 19 Z" fill="#000"/></svg>
<div class="t" style="right:852px;top:387px;font-size:16px;line-height:16px;color:#000;">Prefix:</div>
<div style="left:552px;top:385px;width:18px;height:18px;background:#fff;border:1px solid #a0a0a0;box-sizing:border-box"></div>
<div style="left:580px;top:381px;width:278px;height:26px;background:#fff;border:1px solid #a0a0a0;box-sizing:border-box"></div>
<div class="t" style="left:584px;top:387px;font-size:16px;line-height:16px;color:#000;">0.0.0.0/0</div>
<svg style="position:absolute;left:864px;top:390px" width="14" height="8" viewBox="0 0 14 8"><path d="M0.5 7.5 L13.5 7.5 L7 0.5 Z" fill="#000"/></svg>
<div class="t" style="right:852px;top:421px;font-size:16px;line-height:16px;color:#000;">Prefix Length:</div>
<div style="left:552px;top:415px;width:306px;height:26px;background:#f0f0f0;border:1px solid #a0a0a0;box-sizing:border-box;box-shadow:inset -1px -1px 0 #fff"></div>
<svg style="position:absolute;left:864px;top:424px" width="14" height="8" viewBox="0 0 14 8"><path d="M0.5 0.5 L13.5 0.5 L7 7.5 Z" fill="#000"/></svg>
<div class="t" style="right:852px;top:455px;font-size:16px;line-height:16px;color:#000;">Match Chain:</div>
<div style="left:552px;top:449px;width:306px;height:26px;background:#f0f0f0;border:1px solid #a0a0a0;box-sizing:border-box;box-shadow:inset -1px -1px 0 #fff"></div>
<svg style="position:absolute;left:864px;top:458px" width="14" height="8" viewBox="0 0 14 8"><path d="M0.5 0.5 L13.5 0.5 L7 7.5 Z" fill="#000"/></svg>
<div class="t" style="right:852px;top:489px;font-size:16px;line-height:16px;color:#000;">Protocol:</div>
<div style="left:552px;top:483px;width:306px;height:26px;background:#f0f0f0;border:1px solid #a0a0a0;box-sizing:border-box;box-shadow:inset -1px -1px 0 #fff"></div>
<svg style="position:absolute;left:864px;top:492px" width="14" height="8" viewBox="0 0 14 8"><path d="M0.5 0.5 L13.5 0.5 L7 7.5 Z" fill="#000"/></svg>
<div class="t" style="right:852px;top:523px;font-size:16px;line-height:16px;color:#000;">Distance:</div>
<div style="left:552px;top:517px;width:306px;height:26px;background:#f0f0f0;border:1px solid #a0a0a0;box-sizing:border-box;box-shadow:inset -1px -1px 0 #fff"></div>
<svg style="position:absolute;left:864px;top:526px" width="14" height="8" viewBox="0 0 14 8"><path d="M0.5 0.5 L13.5 0.5 L7 7.5 Z" fill="#000"/></svg>
<div class="t" style="right:852px;top:557px;font-size:16px;line-height:16px;color:#000;">Scope:</div>
<div style="left:552px;top:551px;width:306px;height:26px;background:#f0f0f0;border:1px solid #a0a0a0;box-sizing:border-box;box-shadow:inset -1px -1px 0 #fff"></div>
<svg style="position:absolute;left:864px;top:560px" width="14" height="8" viewBox="0 0 14 8"><path d="M0.5 0.5 L13.5 0.5 L7 7.5 Z" fill="#000"/></svg>
<div class="t" style="right:852px;top:591px;font-size:16px;line-height:16px;color:#000;">Target Scope:</div>
<div style="left:552px;top:585px;width:306px;height:26px;background:#f0f0f0;border:1px solid #a0a0a0;box-sizing:border-box;box-shadow:inset -1px -1px 0 #fff"></div>
<svg style="position:absolute;left:864px;top:594px" width="14" height="8" viewBox="0 0 14 8"><path d="M0.5 0.5 L13.5 0.5 L7 7.5 Z" fill="#000"/></svg>
<div class="t" style="right:852px;top:625px;font-size:16px;line-height:16px;color:#000;">Pref. Source:</div>
<div style="left:552px;top:619px;width:306px;height:26px;background:#f0f0f0;border:1px solid #a0a0a0;box-sizing:border-box;box-shadow:inset -1px -1px 0 #fff"></div>
<svg style="position:absolute;left:864px;top:628px" width="14" height="8" viewBox="0 0 14 8"><path d="M0.5 0.5 L13.5 0.5 L7 7.5 Z" fill="#000"/></svg>
<div class="t" style="right:852px;top:659px;font-size:16px;line-height:16px;color:#000;">Routing Mark:</div>
<div style="left:552px;top:653px;width:306px;height:26px;background:#f0f0f0;border:1px solid #a0a0a0;box-sizing:border-box;box-shadow:inset -1px -1px 0 #fff"></div>
<svg style="position:absolute;left:864px;top:662px" width="14" height="8" viewBox="0 0 14 8"><path d="M0.5 0.5 L13.5 0.5 L7 7.5 Z" fill="#000"/></svg>
<div class="t" style="right:852px;top:693px;font-size:16px;line-height:16px;color:#000;">Route Comment:</div>
<div style="left:552px;top:687px;width:306px;height:26px;background:#f0f0f0;border:1px solid #a0a0a0;box-sizing:border-box;box-shadow:inset -1px -1px 0 #fff"></div>
<svg style="position:absolute;left:864px;top:696px" width="14" height="8" viewBox="0 0 14 8"><path d="M0.5 0.5 L13.5 0.5 L7 7.5 Z" fill="#000"/></svg>
<div class="t" style="right:852px;top:727px;font-size:16px;line-height:16px;color:#000;">Route Tag:</div>
<div style="left:552px;top:721px;width:306px;height:26px;background:#f0f0f0;border:1px solid #a0a0a0;box-sizing:border-box;box-shadow:inset -1px -1px 0 #fff"></div>
<svg style="position:absolute;left:864px;top:730px" width="14" height="8" viewBox="0 0 14 8"><path d="M0.5 0.5 L13.5 0.5 L7 7.5 Z" fill="#000"/></svg>
<div class="t" style="right:852px;top:761px;font-size:16px;line-height:16px;color:#000;">Route Targets:</div>
<div style="left:552px;top:755px;width:306px;height:26px;background:#f0f0f0;border:1px solid #a0a0a0;box-sizing:border-box;box-shadow:inset -1px -1px 0 #fff"></div>
<svg style="position:absolute;left:863px;top:758px" width="16" height="20" viewBox="0 0 16 20"><path d="M1 8.5 L15 8.5 L8 1.5 Z" fill="#8a9490"/><path d="M1 11 L15 11 L8 18.5 Z" fill="#000"/></svg>
<div style="left:552px;top:793px;width:18px;height:18px;background:#fff;border:1px solid #a0a0a0;box-sizing:border-box"></div>
<div class="t" style="left:575px;top:795px;font-size:16px;line-height:16px;color:#000;">Invert Route Targets</div>
<div class="t" style="right:852px;top:829px;font-size:16px;line-height:16px;color:#000;">Site Of Origin:</div>
<div style="left:552px;top:823px;width:306px;height:26px;background:#f0f0f0;border:1px solid #a0a0a0;box-sizing:border-box;box-shadow:inset -1px -1px 0 #fff"></div>
<svg style="position:absolute;left:863px;top:826px" width="16" height="20" viewBox="0 0 16 20"><path d="M1 8.5 L15 8.5 L8 1.5 Z" fill="#8a9490"/><path d="M1 11 L15 11 L8 18.5 Z" fill="#000"/></svg>
<div style="left:552px;top:861px;width:18px;height:18px;background:#fff;border:1px solid #a0a0a0;box-sizing:border-box"></div>
<div class="t" style="left:575px;top:863px;font-size:16px;line-height:16px;color:#000;">Invert Site Of Origin</div>
<div class="t" style="right:852px;top:897px;font-size:16px;line-height:16px;color:#000;">Address Family:</div>
<div style="left:552px;top:891px;width:306px;height:26px;background:#f0f0f0;border:1px solid #a0a0a0;box-sizing:border-box;box-shadow:inset -1px -1px 0 #fff"></div>
<svg style="position:absolute;left:864px;top:900px" width="14" height="8" viewBox="0 0 14 8"><path d="M0.5 0.5 L13.5 0.5 L7 7.5 Z" fill="#000"/></svg>
<div class="t" style="right:852px;top:931px;font-size:16px;line-height:16px;color:#000;">OSPF Type:</div>
<div style="left:552px;top:925px;width:306px;height:26px;background:#f0f0f0;border:1px solid #a0a0a0;box-sizing:border-box;box-shadow:inset -1px -1px 0 #fff"></div>
<svg style="position:absolute;left:864px;top:934px" width="14" height="8" viewBox="0 0 14 8"><path d="M0.5 0.5 L13.5 0.5 L7 7.5 Z" fill="#000"/></svg>
<div style="left:425px;top:961px;width:459px;height:1px;background:#b4b4b4"></div>
<div style="left:552px;top:975px;width:18px;height:18px;background:#fff;border:1px solid #a0a0a0;box-sizing:border-box"></div>
<div class="t" style="left:575px;top:977px;font-size:16px;line-height:16px;color:#000;">Invert Match</div>
<div style="left:414px;top:1010px;width:506px;height:40px;background:#f0f0f0;border-left:1px solid #a0a0a0;border-top:1px solid #a0a0a0;box-sizing:border-box;box-shadow:inset 1px 0 0 #fff"></div>
<div style="left:415px;top:1008px;width:505px;height:1px;background:#f8f8f8"></div>
<div class="t" style="left:418px;top:1017px;font-size:16px;line-height:16px;color:#000;">enabled</div>
<div style="left:889px;top:265px;width:507px;height:766px;background:#000"></div>
<div style="left:890px;top:266px;width:505px;height:764px;background:#f0f0f0"></div>
<div style="left:890px;top:266px;width:505px;height:29px;background:#4f4fcd"></div>
<div style="left:890px;top:266px;width:505px;height:1px;background:#8a8ae8"></div>
<div style="left:890px;top:266px;width:1px;height:764px;background:#fafafa"></div>
<div style="left:890px;top:266px;width:1px;height:29px;background:#8a8ae8"></div>
<div class="t" style="left:896px;top:275px;font-size:16px;line-height:16px;color:#fff;">Route Filter &lt;&gt;</div>
<div style="left:979px;top:301px;width:49px;height:31px;background:#d8d8d8;border-left:1px solid #d8d8d8;border-top:1px solid #f6f6f6;border-right:1px solid #b0b0b0;box-sizing:border-box"></div>
<div style="left:1028px;top:301px;width:69px;height:31px;background:#d8d8d8;border-left:1px solid #f6f6f6;border-top:1px solid #f6f6f6;border-right:1px solid #b0b0b0;box-sizing:border-box"></div>
<div style="left:1097px;top:301px;width:107px;height:31px;background:#d8d8d8;border-left:1px solid #f6f6f6;border-top:1px solid #f6f6f6;border-right:1px solid #b0b0b0;box-sizing:border-box"></div>
<div style="left:892px;top:332px;width:352px;height:672px;background:#f0f0f0;border-left:1px solid #fff;border-top:1px solid #fff;border-right:1px solid #a0a0a0;border-bottom:1px solid #a0a0a0;box-sizing:border-box"></div>
<div style="left:894px;top:297px;width:85px;height:36px;background:#f0f0f0;border-left:1px solid #fff;border-top:1px solid #fff;border-right:1px solid #a0a0a0;border-bottom:none;box-sizing:border-box"></div>
<div class="t" style="left:894px;width:85px;text-align:center;top:308px;font-size:16px;line-height:16px;color:#000;">Matchers</div>
<div class="t" style="left:979px;width:49px;text-align:center;top:310px;font-size:16px;line-height:16px;color:#000;">BGP</div>
<div class="t" style="left:1028px;width:69px;text-align:center;top:310px;font-size:16px;line-height:16px;color:#000;">Actions</div>
<div class="t" style="left:1097px;width:107px;text-align:center;top:310px;font-size:16px;line-height:16px;color:#000;">BGP Actions</div>
<div class="t" style="right:374px;top:349px;font-size:16px;line-height:16px;color:#000;">Chain:</div>
<div style="left:1030px;top:343px;width:177px;height:26px;background:#fff;border:1px solid #a0a0a0;box-sizing:border-box"></div>
<div class="t" style="left:1034px;top:349px;font-size:16px;line-height:16px;color:#000;">BGP-OUT</div>
<div style="left:1208px;top:343px;width:25px;height:26px;background:#f0f0f0;border:1px solid #a0a0a0;box-sizing:border-box;box-shadow:inset 1px 1px 0 #fff"></div>
<svg style="position:absolute;left:1208px;top:343px" width="25" height="26" viewBox="0 0 25 26"><rect x="7.0" y="6" width="11" height="1.3" fill="#000"/><rect x="10.0" y="9.5" width="5" height="4" fill="#000"/><path d="M7.0 13 L18.0 13 L12.5 19 Z" fill="#000"/></svg>
<div class="t" style="right:374px;top:383px;font-size:16px;line-height:16px;color:#000;">Prefix:</div>
<div style="left:1030px;top:377px;width:176px;height:26px;background:#f0f0f0;border:1px solid #a0a0a0;box-sizing:border-box;box-shadow:inset -1px -1px 0 #fff"></div>
<svg style="position:absolute;left:1212px;top:386px" width="14" height="8" viewBox="0 0 14 8"><path d="M0.5 0.5 L13.5 0.5 L7 7.5 Z" fill="#000"/></svg>
<div class="t" style="right:374px;top:417px;font-size:16px;line-height:16px;color:#000;">Prefix Length:</div>
<div style="left:1030px;top:411px;width:176px;height:26px;background:#f0f0f0;border:1px solid #a0a0a0;box-sizing:border-box;box-shadow:inset -1px -1px 0 #fff"></div>
<svg style="position:absolute;left:1212px;top:420px" width="14" height="8" viewBox="0 0 14 8"><path d="M0.5 0.5 L13.5 0.5 L7 7.5 Z" fill="#000"/></svg>
<div class="t" style="right:374px;top:451px;font-size:16px;line-height:16px;color:#000;">Match Chain:</div>
<div style="left:1030px;top:445px;width:176px;height:26px;background:#f0f0f0;border:1px solid #a0a0a0;box-sizing:border-box;box-shadow:inset -1px -1px 0 #fff"></div>
<svg style="position:absolute;left:1212px;top:454px" width="14" height="8" viewBox="0 0 14 8"><path d="M0.5 0.5 L13.5 0.5 L7 7.5 Z" fill="#000"/></svg>
<div class="t" style="right:374px;top:485px;font-size:16px;line-height:16px;color:#000;">Protocol:</div>
<div style="left:1030px;top:479px;width:176px;height:26px;background:#f0f0f0;border:1px solid #a0a0a0;box-sizing:border-box;box-shadow:inset -1px -1px 0 #fff"></div>
<svg style="position:absolute;left:1212px;top:488px" width="14" height="8" viewBox="0 0 14 8"><path d="M0.5 0.5 L13.5 0.5 L7 7.5 Z" fill="#000"/></svg>
<div class="t" style="right:374px;top:519px;font-size:16px;line-height:16px;color:#000;">Distance:</div>
<div style="left:1030px;top:513px;width:176px;height:26px;background:#f0f0f0;border:1px solid #a0a0a0;box-sizing:border-box;box-shadow:inset -1px -1px 0 #fff"></div>
<svg style="position:absolute;left:1212px;top:522px" width="14" height="8" viewBox="0 0 14 8"><path d="M0.5 0.5 L13.5 0.5 L7 7.5 Z" fill="#000"/></svg>
<div class="t" style="right:374px;top:553px;font-size:16px;line-height:16px;color:#000;">Scope:</div>
<div style="left:1030px;top:547px;width:176px;height:26px;background:#f0f0f0;border:1px solid #a0a0a0;box-sizing:border-box;box-shadow:inset -1px -1px 0 #fff"></div>
<svg style="position:absolute;left:1212px;top:556px" width="14" height="8" viewBox="0 0 14 8"><path d="M0.5 0.5 L13.5 0.5 L7 7.5 Z" fill="#000"/></svg>
<div class="t" style="right:374px;top:587px;font-size:16px;line-height:16px;color:#000;">Target Scope:</div>
<div style="left:1030px;top:581px;width:176px;height:26px;background:#f0f0f0;border:1px solid #a0a0a0;box-sizing:border-box;box-shadow:inset -1px -1px 0 #fff"></div>
<svg style="position:absolute;left:1212px;top:590px" width="14" height="8" viewBox="0 0 14 8"><path d="M0.5 0.5 L13.5 0.5 L7 7.5 Z" fill="#000"/></svg>
<div class="t" style="right:374px;top:621px;font-size:16px;line-height:16px;color:#000;">Pref. Source:</div>
<div style="left:1030px;top:615px;width:176px;height:26px;background:#f0f0f0;border:1px solid #a0a0a0;box-sizing:border-box;box-shadow:inset -1px -1px 0 #fff"></div>
<svg style="position:absolute;left:1212px;top:624px" width="14" height="8" viewBox="0 0 14 8"><path d="M0.5 0.5 L13.5 0.5 L7 7.5 Z" fill="#000"/></svg>
<div class="t" style="right:374px;top:655px;font-size:16px;line-height:16px;color:#000;">Routing Mark:</div>
<div style="left:1030px;top:649px;width:176px;height:26px;background:#f0f0f0;border:1px solid #a0a0a0;box-sizing:border-box;box-shadow:inset -1px -1px 0 #fff"></div>
<svg style="position:absolute;left:1212px;top:658px" width="14" height="8" viewBox="0 0 14 8"><path d="M0.5 0.5 L13.5 0.5 L7 7.5 Z" fill="#000"/></svg>
<div class="t" style="right:374px;top:689px;font-size:16px;line-height:16px;color:#000;">Route Comment:</div>
<div style="left:1030px;top:683px;width:176px;height:26px;background:#f0f0f0;border:1px solid #a0a0a0;box-sizing:border-box;box-shadow:inset -1px -1px 0 #fff"></div>
<svg style="position:absolute;left:1212px;top:692px" width="14" height="8" viewBox="0 0 14 8"><path d="M0.5 0.5 L13.5 0.5 L7 7.5 Z" fill="#000"/></svg>
<div class="t" style="right:374px;top:723px;font-size:16px;line-height:16px;color:#000;">Route Tag:</div>
<div style="left:1030px;top:717px;width:176px;height:26px;background:#f0f0f0;border:1px solid #a0a0a0;box-sizing:border-box;box-shadow:inset -1px -1px 0 #fff"></div>
<svg style="position:absolute;left:1212px;top:726px" width="14" height="8" viewBox="0 0 14 8"><path d="M0.5 0.5 L13.5 0.5 L7 7.5 Z" fill="#000"/></svg>
<div class="t" style="right:374px;top:757px;font-size:16px;line-height:16px;color:#000;">Route Targets:</div>
<div style="left:1030px;top:751px;width:176px;height:26px;background:#f0f0f0;border:1px solid #a0a0a0;box-sizing:border-box;box-shadow:inset -1px -1px 0 #fff"></div>
<svg style="position:absolute;left:1211px;top:754px" width="16" height="20" viewBox="0 0 16 20"><path d="M1 8.5 L15 8.5 L8 1.5 Z" fill="#8a9490"/><path d="M1 11 L15 11 L8 18.5 Z" fill="#000"/></svg>
<div style="left:1030px;top:789px;width:18px;height:18px;background:#fff;border:1px solid #a0a0a0;box-sizing:border-box"></div>
<div class="t" style="left:1053px;top:791px;font-size:16px;line-height:16px;color:#000;">Invert Route Targets</div>
<div class="t" style="right:374px;top:825px;font-size:16px;line-height:16px;color:#000;">Site Of Origin:</div>
<div style="left:1030px;top:819px;width:176px;height:26px;background:#f0f0f0;border:1px solid #a0a0a0;box-sizing:border-box;box-shadow:inset -1px -1px 0 #fff"></div>
<svg style="position:absolute;left:1211px;top:822px" width="16" height="20" viewBox="0 0 16 20"><path d="M1 8.5 L15 8.5 L8 1.5 Z" fill="#8a9490"/><path d="M1 11 L15 11 L8 18.5 Z" fill="#000"/></svg>
<div style="left:1030px;top:857px;width:18px;height:18px;background:#fff;border:1px solid #a0a0a0;box-sizing:border-box"></div>
<div class="t" style="left:1053px;top:859px;font-size:16px;line-height:16px;color:#000;">Invert Site Of Origin</div>
<div class="t" style="right:374px;top:893px;font-size:16px;line-height:16px;color:#000;">Address Family:</div>
<div style="left:1030px;top:887px;width:176px;height:26px;background:#f0f0f0;border:1px solid #a0a0a0;box-sizing:border-box;box-shadow:inset -1px -1px 0 #fff"></div>
<svg style="position:absolute;left:1212px;top:896px" width="14" height="8" viewBox="0 0 14 8"><path d="M0.5 0.5 L13.5 0.5 L7 7.5 Z" fill="#000"/></svg>
<div class="t" style="right:374px;top:927px;font-size:16px;line-height:16px;color:#000;">OSPF Type:</div>
<div style="left:1030px;top:921px;width:176px;height:26px;background:#f0f0f0;border:1px solid #a0a0a0;box-sizing:border-box;box-shadow:inset -1px -1px 0 #fff"></div>
<svg style="position:absolute;left:1212px;top:930px" width="14" height="8" viewBox="0 0 14 8"><path d="M0.5 0.5 L13.5 0.5 L7 7.5 Z" fill="#000"/></svg>
<div style="left:903px;top:957px;width:329px;height:1px;background:#b4b4b4"></div>
<div style="left:1030px;top:971px;width:18px;height:18px;background:#fff;border:1px solid #a0a0a0;box-sizing:border-box"></div>
<div class="t" style="left:1053px;top:973px;font-size:16px;line-height:16px;color:#000;">Invert Match</div>
<div style="left:892px;top:1006px;width:499px;height:40px;background:#f0f0f0;border-left:1px solid #a0a0a0;border-top:1px solid #a0a0a0;box-sizing:border-box;box-shadow:inset 1px 0 0 #fff"></div>
<div style="left:893px;top:1004px;width:498px;height:1px;background:#f8f8f8"></div>
<div class="t" style="left:896px;top:1013px;font-size:16px;line-height:16px;color:#000;">enabled</div>
<div style="left:1345px;top:270px;width:22px;height:21px;background:#ece8ec;border:1px solid #404040;box-sizing:border-box;box-shadow:inset 1px 1px 0 #fff"></div>
<div style="left:1350px;top:274px;width:12px;height:12px;border:1px solid #404040;border-top:3px solid #404040;box-sizing:border-box"></div>
<div style="left:1369px;top:270px;width:22px;height:21px;background:#ece8ec;border:1px solid #404040;box-sizing:border-box;box-shadow:inset 1px 1px 0 #fff"></div>
<svg style="position:absolute;left:1369px;top:270px" width="22" height="21" viewBox="0 0 22 21"><path d="M6.5 5.5 L15.5 14.5 M15.5 5.5 L6.5 14.5" stroke="#303030" stroke-width="2.2"/></svg>
<div style="left:1260px;top:304px;width:123px;height:32px;background:#f0f0f0;border:1px solid #000;box-sizing:border-box;box-shadow:inset 1px 1px 0 #fff,0 0 0 1px #fff"></div>
<div class="t" style="left:1260px;width:123px;text-align:center;top:313px;font-size:16px;line-height:16px;color:#000;">OK</div>
<div style="left:1260px;top:339px;width:123px;height:32px;background:#f0f0f0;border:1px solid #a0a0a0;box-sizing:border-box;box-shadow:inset 1px 1px 0 #fff"></div>
<div class="t" style="left:1260px;width:123px;text-align:center;top:348px;font-size:16px;line-height:16px;color:#000;">Cancel</div>
<div style="left:1260px;top:374px;width:123px;height:32px;background:#f0f0f0;border:1px solid #a0a0a0;box-sizing:border-box;box-shadow:inset 1px 1px 0 #fff"></div>
<div class="t" style="left:1260px;width:123px;text-align:center;top:383px;font-size:16px;line-height:16px;color:#000;">Apply</div>
<div style="left:1260px;top:415px;width:123px;height:32px;background:#f0f0f0;border:1px solid #a0a0a0;box-sizing:border-box;box-shadow:inset 1px 1px 0 #fff"></div>
<div class="t" style="left:1260px;width:123px;text-align:center;top:424px;font-size:16px;line-height:16px;color:#000;">Disable</div>
<div style="left:1260px;top:450px;width:123px;height:32px;background:#f0f0f0;border:1px solid #a0a0a0;box-sizing:border-box;box-shadow:inset 1px 1px 0 #fff"></div>
<div class="t" style="left:1260px;width:123px;text-align:center;top:459px;font-size:16px;line-height:16px;color:#000;">Comment</div>
<div style="left:1260px;top:485px;width:123px;height:32px;background:#f0f0f0;border:1px solid #a0a0a0;box-sizing:border-box;box-shadow:inset 1px 1px 0 #fff"></div>
<div class="t" style="left:1260px;width:123px;text-align:center;top:494px;font-size:16px;line-height:16px;color:#000;">Copy</div>
<div style="left:1260px;top:520px;width:123px;height:32px;background:#f0f0f0;border:1px solid #a0a0a0;box-sizing:border-box;box-shadow:inset 1px 1px 0 #fff"></div>
<div class="t" style="left:1260px;width:123px;text-align:center;top:529px;font-size:16px;line-height:16px;color:#000;">Remove</div>
</body></html>
